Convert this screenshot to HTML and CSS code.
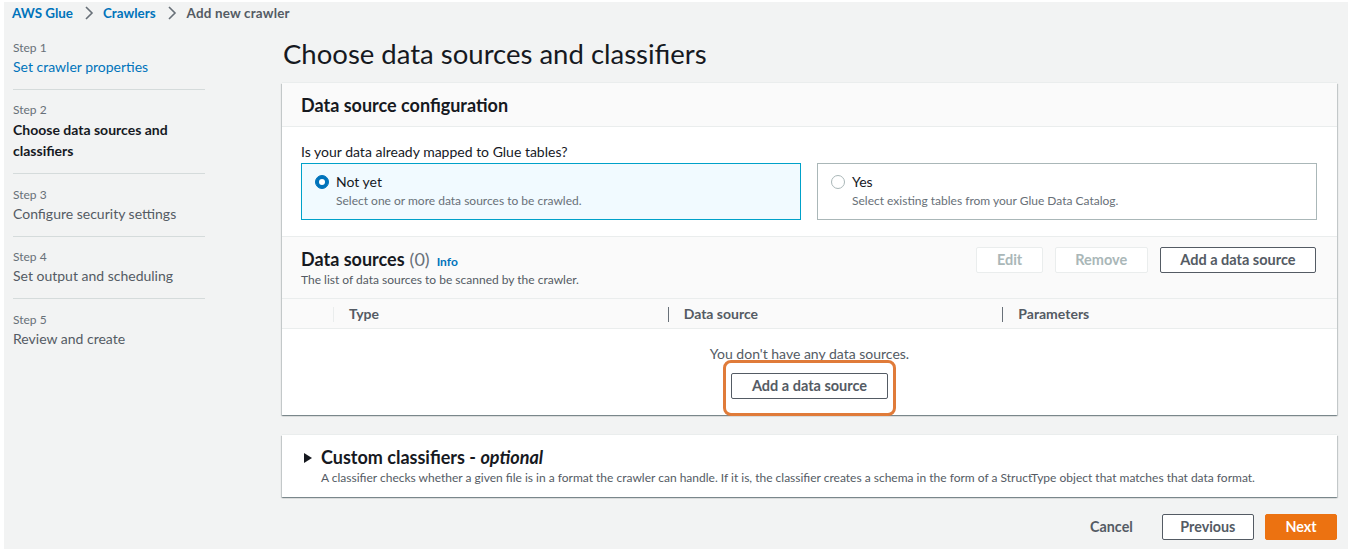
FILE: index.html
```html
<!DOCTYPE html>
<html lang="en">
<head>
<meta charset="utf-8">
<title>Add new crawler</title>
<link rel="stylesheet" href="styles.css">
</head>
<body>
<div class="frame">
  <nav class="crumbs">
    <a class="crumb-link">AWS Glue</a>
    <svg class="chev" width="10" height="14" viewBox="0 0 10 14"><polyline points="2,1 8,7 2,13" fill="none" stroke="#687078" stroke-width="1.6"/></svg>
    <a class="crumb-link">Crawlers</a>
    <svg class="chev" width="10" height="14" viewBox="0 0 10 14"><polyline points="2,1 8,7 2,13" fill="none" stroke="#687078" stroke-width="1.6"/></svg>
    <span class="crumb-current">Add new crawler</span>
  </nav>
  <div class="layout">
    <aside class="steps">
      <div class="step first">
        <div class="step-num">Step 1</div>
        <a class="step-title link">Set crawler properties</a>
      </div>
      <div class="step second">
        <div class="step-num">Step 2</div>
        <div class="step-title current">Choose data sources and<br>classifiers</div>
      </div>
      <div class="step">
        <div class="step-num">Step 3</div>
        <div class="step-title">Configure security settings</div>
      </div>
      <div class="step">
        <div class="step-num">Step 4</div>
        <div class="step-title">Set output and scheduling</div>
      </div>
      <div class="step last">
        <div class="step-num">Step 5</div>
        <div class="step-title">Review and create</div>
      </div>
    </aside>
    <main class="main">
      <h1 class="page-title">Choose data sources and classifiers</h1>
      <section class="panel">
        <div class="panel-head"><h2 class="panel-title">Data source configuration</h2></div>
        <div class="panel-body">
          <div class="question">Is your data already mapped to Glue tables?</div>
          <div class="tiles">
            <div class="tile selected">
              <span class="radio checked"></span>
              <div class="tile-text">
                <div class="tile-label">Not yet</div>
                <div class="tile-desc">Select one or more data sources to be crawled.</div>
              </div>
            </div>
            <div class="tile">
              <span class="radio"></span>
              <div class="tile-text">
                <div class="tile-label">Yes</div>
                <div class="tile-desc">Select existing tables from your Glue Data Catalog.</div>
              </div>
            </div>
          </div>
        </div>
        <div class="ds-head">
          <div class="ds-title-wrap">
            <div class="ds-title"><span class="ds-name">Data sources</span><span class="ds-count">(0)</span><a class="info">Info</a></div>
            <div class="ds-desc">The list of data sources to be scanned by the crawler.</div>
          </div>
          <div class="ds-actions">
            <button class="btn disabled">Edit</button>
            <button class="btn disabled">Remove</button>
            <button class="btn">Add a data source</button>
          </div>
        </div>
        <div class="table-head">
          <div class="th sel"></div>
          <div class="th">Type</div>
          <div class="th">Data source</div>
          <div class="th">Parameters</div>
        </div>
        <div class="empty">
          <div class="empty-text">You don't have any data sources.</div>
          <div class="highlight-wrap">
            <button class="btn">Add a data source</button>
          </div>
        </div>
      </section>
      <section class="panel expand">
        <div class="expand-title">
          <svg class="caret" width="10" height="12" viewBox="0 0 10 12"><polygon points="1,1 9,6 1,11" fill="#16191f"/></svg>
          <span>Custom classifiers - <em>optional</em></span>
        </div>
        <div class="expand-desc">A classifier checks whether a given file is in a format the crawler can handle. If it is, the classifier creates a schema in the form of a StructType object that matches that data format.</div>
      </section>
      <div class="footer">
        <button class="btn link-btn">Cancel</button>
        <button class="btn">Previous</button>
        <button class="btn primary">Next</button>
      </div>
    </main>
  </div>
</div>
</body>
</html>
```

FILE: styles.css
```css
* { box-sizing: border-box; }
html, body { margin: 0; padding: 0; background: #ffffff; }
body {
  font-family: Lato, "Open Sans", "Liberation Sans", sans-serif;
  color: #16191f;
  font-size: 14px;
}
.frame {
  margin: 2px 2px 1px 4px;
  height: 547px;
  background: #f2f3f3;
  padding: 0 11px 0 8px;
  overflow: hidden;
}
.crumbs {
  height: 22px;
  display: flex;
  align-items: center;
  font-weight: 700;
  font-size: 13.4px;
}
.crumb-link { color: #0073bb; }
.crumb-current { color: #545b64; letter-spacing: 0.2px; margin-left: 1px; }
.chev { margin: 0 9px 0 11px; }

.layout {
  display: flex;
  gap: 77px;
}
.steps {
  width: 193px;
  flex: none;
  padding-left: 1px;
}
.step {
  padding: 11.5px 0 12px;
  border-bottom: 1px solid #d5dbdb;
}
.step.first { padding-top: 15px; }
.step.second { padding-top: 11px; }
.step.last { border-bottom: none; }
.step-num {
  font-size: 12px;
  line-height: 18px;
  color: #687078;
}
.step-title {
  display: block;
  font-size: 14px;
  line-height: 20px;
  color: #545b64;
}
.step-title.link { color: #0073bb; }
.step-title.current { color: #16191f; font-weight: 700; line-height: 21px; }

.main {
  flex: 1;
  min-width: 0;
}
.page-title {
  margin: 12px 0 11px 1px;
  font-size: 27.5px;
  line-height: 36px;
  font-weight: 400;
  color: #16191f;
}
.panel {
  background: #ffffff;
  box-shadow: 0 1px 1px 0 rgba(0,28,36,.3), 1px 1px 1px 0 rgba(0,28,36,.15), -1px 1px 1px 0 rgba(0,28,36,.15), 0 -1px 0 0 #eaeded;
}
.panel-head {
  height: 44px;
  background: #fafafa;
  border-bottom: 1px solid #eaeded;
  display: flex;
  align-items: center;
  padding: 0 19px;
}
.panel-title {
  margin: 0;
  font-size: 18px;
  font-weight: 700;
  line-height: 24px;
}
.panel-body {
  padding: 15px 20px 16px 19px;
  border-bottom: 1px solid #eaeded;
}
.question {
  font-size: 14px;
  line-height: 20px;
  margin-bottom: 1px;
}
.tiles {
  display: grid;
  grid-template-columns: 1fr 1fr;
  gap: 16px;
}
.tile {
  border: 1px solid #aab7b8;
  padding: 8px 13px 9px;
  display: flex;
  gap: 7px;
  align-items: flex-start;
  background: #ffffff;
}
.tile.selected {
  background: #f1faff;
  border-color: #00a1c9;
}
.radio {
  width: 14px;
  height: 14px;
  border-radius: 50%;
  border: 1px solid #aab7b8;
  background: #ffffff;
  margin-top: 3px;
  flex: none;
  position: relative;
}
.radio.checked {
  background: #0073bb;
  border-color: #0073bb;
}
.radio.checked::after {
  content: "";
  position: absolute;
  left: 3px;
  top: 3px;
  width: 6px;
  height: 6px;
  border-radius: 50%;
  background: #ffffff;
}
.tile-label { font-size: 14px; line-height: 20px; }
.tile-desc { font-size: 12px; line-height: 18px; color: #687078; }

.ds-head {
  height: 62px;
  background: #fafafa;
  display: flex;
  justify-content: space-between;
  align-items: flex-start;
  padding: 11px 21px 0 19px;
  border-bottom: 1px solid #eaeded;
}
.ds-title {
  display: flex;
  align-items: baseline;
  gap: 5px;
  height: 22px;
  font-size: 18px;
  line-height: 22px;
}
.ds-name { font-weight: 700; }
.ds-count { color: #687078; }
.info { color: #0073bb; font-weight: 700; font-size: 12px; margin-left: 2px; }
.ds-desc { font-size: 12px; line-height: 18px; color: #545b64; margin-top: 1px; }
.ds-actions { display: flex; gap: 12px; margin-top: -1px; }
.ds-actions .btn { padding: 0 19.5px; }

.btn {
  font-family: inherit;
  font-size: 14.5px;
  font-weight: 700;
  height: 26px;
  padding: 0 20px;
  border: 1px solid #545b64;
  border-radius: 2px;
  background: #ffffff;
  color: #545b64;
  line-height: 22px;
}
.btn.disabled {
  border-color: #eaeded;
  color: #aab7b8;
}
.btn.primary {
  background: #ec7211;
  border-color: #ec7211;
  color: #ffffff;
}
.btn.link-btn {
  border-color: transparent;
  background: transparent;
  padding: 0 20px;
}

.table-head {
  display: grid;
  grid-template-columns: 51px 1fr 1fr 1fr;
  height: 30px;
  background: #fafafa;
  border-bottom: 1px solid #eaeded;
  align-items: center;
}
.th {
  position: relative;
  padding-left: 16px;
  font-weight: 700;
  font-size: 14px;
  color: #545b64;
  line-height: 20px;
}
.th::before {
  content: "";
  position: absolute;
  left: 0;
  top: 3px;
  height: 15px;
  width: 1px;
  background: #687078;
}
.th.sel::before { display: none; }
.th:nth-child(2)::before { background: #eaeded; }

.empty {
  height: 86px;
  padding-top: 15px;
  display: flex;
  flex-direction: column;
  align-items: center;
}
.empty-text {
  font-size: 14px;
  line-height: 20px;
  color: #545b64;
}
.highlight-wrap {
  position: relative;
  margin-top: 9px;
}
.highlight-wrap::after {
  content: "";
  position: absolute;
  left: -8px;
  right: -8px;
  top: -13px;
  bottom: -17px;
  border: 3px solid #e07b39;
  border-radius: 8px;
  pointer-events: none;
}

.expand {
  margin-top: 20px;
  height: 62px;
  padding: 11px 20px 0 21px;
}
.expand-title {
  display: flex;
  align-items: center;
  gap: 8px;
  font-size: 18px;
  line-height: 23px;
  font-weight: 700;
}
.expand-title em { font-style: italic; }
.caret { flex: none; }
.expand-desc {
  font-size: 12px;
  line-height: 18px;
  color: #545b64;
  padding-left: 18px;
}
.footer {
  margin-top: 17px;
  display: flex;
  justify-content: flex-end;
  gap: 8px;
}
.footer .btn { font-size: 14.3px; padding: 0 17.5px; }
.footer .btn.link-btn { padding: 0 20px; }
.footer .btn.primary { margin-left: 3px; padding: 0 19.5px; }
```
